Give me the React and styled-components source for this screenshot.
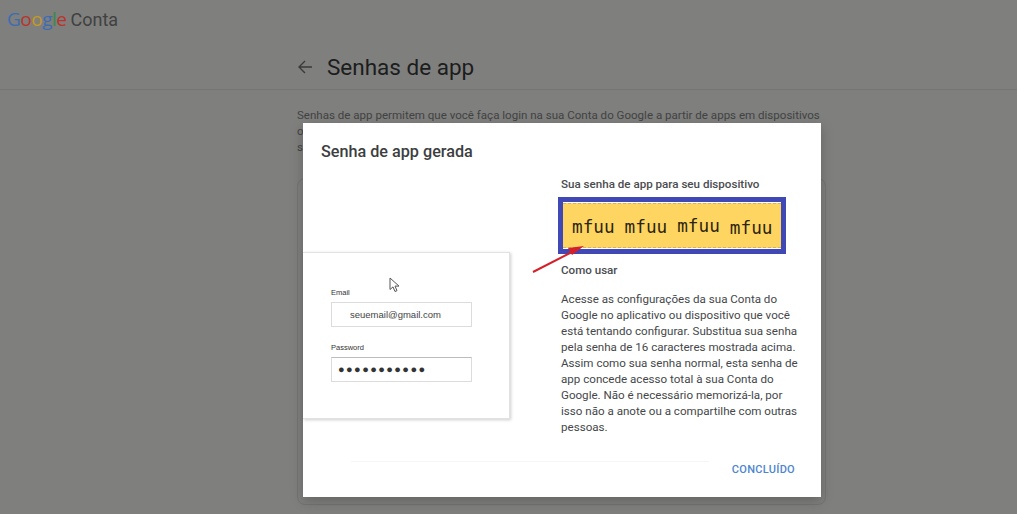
import React from "react";
import styled, { createGlobalStyle } from "styled-components";

const Global = createGlobalStyle`
  html, body { margin: 0; padding: 0; background: #7f7f7d; }
  body { font-family: Roboto, "Liberation Sans", sans-serif; }
`;

const Page = styled.div`
  position: relative;
  width: 1017px;
  height: 514px;
  overflow: hidden;
  background: #7f7f7d;
`;
const Header = styled.header`
  height: 39px;
  padding-left: 7px;
  display: flex;
  align-items: center;
  line-height: 39px;
`;
const Logo = styled.span`
  font-family: "Open Sans", Roboto, sans-serif;
  font-weight: 400;
  font-size: 19px;
  letter-spacing: -0.5px;
  margin-right: 4px;
`;
const L = styled.span`
  color: ${(p) => p.$c};
`;
const Product = styled.span`
  font-family: Roboto, sans-serif;
  font-size: 18px;
  color: #404141;
`;
const TitleBar = styled.div`
  height: 51px;
  border-bottom: 1px solid #747574;
  padding: 6px 0 0 297px;
  display: flex;
  align-items: center;
  gap: 14px;
  box-sizing: border-box;
`;
const BackIcon = styled.svg`
  width: 16px;
  height: 16px;
  fill: none;
  stroke: #3a3b3b;
  stroke-width: 1.4;
`;
const Title = styled.h1`
  margin: 0;
  font-weight: 400;
  font-size: 22.5px;
  color: #1c1d1d;
`;
const Content = styled.main`
  margin-left: 297px;
  width: 529px;
  padding-top: 17px;
`;
const Intro = styled.p`
  margin: 0;
  font-size: 11.55px;
  line-height: 16px;
  color: #424344;
  white-space: nowrap;
`;
const BackCard = styled.div`
  margin-top: 23px;
  height: 327px;
  border: 1px solid #737473;
  border-radius: 8px;
  box-sizing: border-box;
`;
const Modal = styled.section`
  position: absolute;
  left: 303px;
  top: 123px;
  width: 518px;
  height: 374px;
  background: #fff;
  box-shadow: 0 4px 12px rgba(0, 0, 0, 0.22);
  display: grid;
  grid-template-columns: 258px minmax(0, 1fr);
  grid-template-rows: 47px minmax(0, 1fr) 36px;
`;
const ModalTitle = styled.h2`
  grid-column: 1 / -1;
  margin: 0;
  padding: 19px 0 0 18px;
  font-weight: 500;
  font-size: 16.2px;
  line-height: 20px;
  color: #3c3e40;
`;
const Illustration = styled.div`
  padding-top: 82px;
`;
const ShotCard = styled.div`
  width: 207px;
  height: 167px;
  box-sizing: border-box;
  background: #fff;
  border: 1px solid #e2e2e2;
  border-left: 0;
  box-shadow: 1px 1px 3px rgba(0, 0, 0, 0.2);
  padding: 35px 0 0 28px;
  position: relative;
`;
const Label = styled.div`
  font-family: "Liberation Sans", sans-serif;
  font-size: 7.5px;
  line-height: 10px;
  color: #333;
  margin-bottom: 4px;
`;
const FakeInput = styled.div`
  width: 141px;
  height: 25px;
  box-sizing: border-box;
  border: 1px solid #dcdcdc;
  border-top-color: ${(p) => (p.$dark ? "#bcbcbc" : "#dcdcdc")};
  font-family: "Liberation Sans", sans-serif;
  font-size: 9.5px;
  color: #444;
  line-height: 23px;
  padding-left: ${(p) => (p.$dark ? "6px" : "18px")};
  margin-bottom: 16px;
  display: flex;
  align-items: center;
`;
const Dots = styled.span`
  font-size: 11px;
  letter-spacing: 1.4px;
  color: #333;
`;
const Cursor = styled.svg`
  position: absolute;
  left: 86px;
  top: 24px;
  width: 12px;
  height: 16px;
`;
const Side = styled.div`
  padding: 7px 0 0;
`;
const Subhead = styled.h3`
  margin: 0;
  font-weight: 500;
  font-size: 11.6px;
  line-height: 14px;
  color: #4a4c50;
`;
const Highlight = styled.div`
  margin: 6px 0 0 -3px;
  width: 228px;
  height: 57px;
  box-sizing: border-box;
  border: 5px solid #3f48b5;
  padding: 1px 0;
  background: #fff;
`;
const HighlightFill = styled.div`
  height: 100%;
  box-sizing: border-box;
  border-top: 1px dashed #cfb36a;
  border-bottom: 1px dashed #cfb36a;
  background: #ffd561;
  display: flex;
  align-items: center;
  padding: 2px 0 0 9px;
  gap: 10px;
  font-family: "DejaVu Sans Mono", monospace;
  font-size: 17.7px;
  color: #2b2410;
`;
const Word = styled.span`
  transform: translateY(${(p) => p.$dy}px);
`;
const HowTo = styled(Subhead)`
  margin-top: 9px;
`;
const Body = styled.p`
  margin: 14px 0 0;
  font-size: 11.6px;
  line-height: 16px;
  color: #45474a;
  white-space: nowrap;
`;
const Footer = styled.div`
  grid-column: 1 / -1;
  display: flex;
  justify-content: flex-end;
  align-items: flex-start;
  padding: 1px 26px 0 48px;
  position: relative;
`;
const Rule = styled.div`
  position: absolute;
  left: 48px;
  top: 0;
  width: 358px;
  border-top: 1px solid #f6f6f6;
`;
const Done = styled.button`
  border: 0;
  background: none;
  padding: 0;
  font: 500 11px/16px Roboto, sans-serif;
  color: #4d86cf;
  letter-spacing: 0.3px;
`;
const Arrow = styled.svg`
  position: absolute;
  left: 530px;
  top: 240px;
  width: 60px;
  height: 36px;
`;

const bodyLines = [
  "Acesse as configurações da sua Conta do",
  "Google no aplicativo ou dispositivo que você",
  "está tentando configurar. Substitua sua senha",
  "pela senha de 16 caracteres mostrada acima.",
  "Assim como sua senha normal, esta senha de",
  "app concede acesso total à sua Conta do",
  "Google. Não é necessário memorizá-la, por",
  "isso não a anote ou a compartilhe com outras",
  "pessoas.",
];

export default function App() {
  return (
    <Page>
      <Global />
      <Header>
        <Logo>
          <L $c="#3d6cb4">G</L><L $c="#b9352b">o</L><L $c="#c29a26">o</L><L $c="#3d6cb4">g</L><L $c="#3a8a4b">l</L><L $c="#b9352b">e</L>
        </Logo>
        <Product>Conta</Product>
      </Header>
      <TitleBar>
        <BackIcon viewBox="0 0 16 16">
          <path d="M15 8H2M8 2L2 8l6 6" />
        </BackIcon>
        <Title>Senhas de app</Title>
      </TitleBar>
      <Content>
        <Intro>
          Senhas de app permitem que você faça login na sua Conta do Google a partir de apps em dispositivos
          <br />o
          <br />s
        </Intro>
        <BackCard />
      </Content>
      <Modal>
        <ModalTitle>Senha de app gerada</ModalTitle>
        <Illustration>
          <ShotCard>
            <Cursor viewBox="0 0 12 16">
              <path d="M1 1v11.5l3-2.6 2 4.6 2-.9-2-4.5h4z" fill="#fff" stroke="#555" strokeWidth="1" />
            </Cursor>
            <Label>Email</Label>
            <FakeInput>seuemail@gmail.com</FakeInput>
            <Label>Password</Label>
            <FakeInput $dark><Dots>●●●●●●●●●●●</Dots></FakeInput>
          </ShotCard>
        </Illustration>
        <Side>
          <Subhead>Sua senha de app para seu dispositivo</Subhead>
          <Highlight>
            <HighlightFill>
              <Word $dy={0}>mfuu</Word>
              <Word $dy={0}>mfuu</Word>
              <Word $dy={-1}>mfuu</Word>
              <Word $dy={1}>mfuu</Word>
            </HighlightFill>
          </Highlight>
          <HowTo>Como usar</HowTo>
          <Body>
            {bodyLines.map((l) => (
              <React.Fragment key={l}>{l}<br /></React.Fragment>
            ))}
          </Body>
        </Side>
        <Footer>
          <Rule />
          <Done>CONCLUÍDO</Done>
        </Footer>
      </Modal>
      <Arrow viewBox="0 0 60 36">
        <path d="M3 32L44 11" stroke="#d5202a" strokeWidth="2" fill="none" />
        <path d="M54 6L38 8l4 7z" fill="#d5202a" />
      </Arrow>
    </Page>
  );
}
